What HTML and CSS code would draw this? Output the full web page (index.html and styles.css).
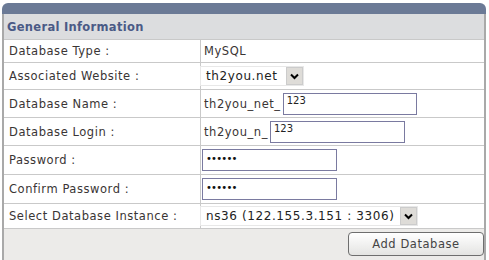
FILE: index.html
```html
<!DOCTYPE html>
<html>
<head>
<meta charset="utf-8">
<link rel="stylesheet" href="styles.css">
</head>
<body>
<div class="panel">
  <div class="titlebar"></div>
  <table class="form">
    <tr class="section"><th colspan="2">General Information</th></tr>
    <tr class="r1"><td class="lbl">Database Type :</td><td class="val"><span class="txt">MySQL</span></td></tr>
    <tr class="r2"><td class="lbl">Associated Website :</td><td class="val"><span class="sel sel-site">th2you.net<span class="arrow"><svg width="9" height="7" viewBox="0 0 9 7"><path d="M1 1.5 L4.5 5 L8 1.5" fill="none" stroke="#000" stroke-width="2"/></svg></span></span></td></tr>
    <tr class="r3"><td class="lbl">Database Name :</td><td class="val"><span class="txt">th2you_net_</span><span class="inp inp-name">123</span></td></tr>
    <tr class="r3"><td class="lbl">Database Login :</td><td class="val"><span class="txt">th2you_n_</span><span class="inp inp-login">123</span></td></tr>
    <tr class="r4"><td class="lbl">Password :</td><td class="val"><span class="inp inp-pw">&#8226;&#8226;&#8226;&#8226;&#8226;&#8226;</span></td></tr>
    <tr class="r4"><td class="lbl">Confirm Password :</td><td class="val"><span class="inp inp-pw">&#8226;&#8226;&#8226;&#8226;&#8226;&#8226;</span></td></tr>
    <tr class="r5"><td class="lbl">Select Database Instance :</td><td class="val"><span class="sel sel-inst">ns36 (122.155.3.151 : 3306)<span class="arrow"><svg width="9" height="7" viewBox="0 0 9 7"><path d="M1 1.5 L4.5 5 L8 1.5" fill="none" stroke="#000" stroke-width="2"/></svg></span></span></td></tr>
    <tr class="foot"><td colspan="2"><span class="btn">Add Database</span></td></tr>
  </table>
</div>
</body>
</html>
```
FILE: styles.css
```css
html, body {
  margin: 0;
  padding: 0;
  background: #ffffff;
}
body {
  font-family: "DejaVu Sans", Verdana, sans-serif;
  font-size: 11.5px;
  letter-spacing: 0.55px;
  color: #3a3535;
}
.panel {
  margin: 3px 3px 0 2px;
  width: 484px;
}
.titlebar {
  height: 11px;
  background: #6b7a96;
  border-radius: 6px 6px 0 0;
}
.form {
  width: 484px;
  border-collapse: collapse;
  border-left: 2px solid #a9a9a9;
  border-right: 2px solid #a9a9a9;
}
.form td, .form th {
  border-top: 1px solid #c9c9c9;
  padding: 0;
}
.section th {
  height: 25px;
  background: #dcdddf;
  text-align: left;
  font-weight: bold;
  font-size: 11.5px;
  letter-spacing: 0.3px;
  color: #4a5a86;
  padding-left: 3px;
  border-top: none;
}
.lbl {
  width: 191px;
  padding-left: 5px !important;
  border-right: 1px solid #c9c9c9;
  white-space: nowrap;
}
.val {
  padding-left: 0;
  white-space: nowrap;
}
.txt {
  margin-left: 3px;
  vertical-align: middle;
}
.r1 td { height: 22px; }
.r2 td { height: 26px; }
.r3 td { height: 27px; }
.r4 td { height: 28px; }
.r5 td { height: 24px; }
.sel {
  display: inline-flex;
  align-items: center;
  justify-content: space-between;
  height: 20px;
  padding-left: 5px;
  margin-left: -1px;
  font-size: 12px;
  letter-spacing: 0.6px;
  color: #222;
  background: #fff;
  border: 1px solid #e8e8e8;
  box-sizing: border-box;
}
.arrow {
  display: inline-flex;
  align-items: center;
  justify-content: center;
  width: 17px;
  height: 18px;
  margin-left: 3px;
  background: #dedcd8;
  border: 1px solid #ccc;
  box-sizing: border-box;
}
.sel-site { width: 104px; }
.sel-inst { width: 218px; }
.inp {
  display: inline-block;
  vertical-align: middle;
  height: 22px;
  border: 1px solid #7a7aa0;
  box-sizing: border-box;
  background: #fff;
  font-size: 10px;
  letter-spacing: 0;
  line-height: 12px;
  padding: 1px 3px;
  color: #222;
}
.inp-name { width: 134px; margin-left: 2px; }
.inp-login { width: 135px; margin-left: 2px; }
.inp-pw { width: 135px; margin-left: 1px; font-size: 10px; line-height: 18px; padding-top: 0; letter-spacing: -0.8px; color: #111; }
.foot td {
  height: 33px;
  background: #ecebe9;
  text-align: right;
  vertical-align: top;
}
.btn {
  display: inline-block;
  width: 136px;
  height: 24px;
  margin-top: 3px;
  box-sizing: border-box;
  border: 1px solid #6e6e6e;
  border-radius: 4px;
  background: linear-gradient(#ffffff, #e4e4e2);
  text-align: center;
  line-height: 22px;
  color: #444;
}
```
